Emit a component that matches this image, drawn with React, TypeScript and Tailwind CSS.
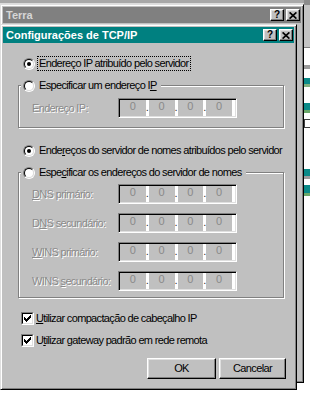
import React from 'react';

const raised =
  'border border-t-white border-l-white border-b-black border-r-black shadow-[inset_-1px_-1px_0_#808080,inset_1px_1px_0_#dfdfdf]';
const sunken =
  'border border-t-[#808080] border-l-[#808080] border-b-white border-r-white shadow-[inset_1px_1px_0_#000,inset_-1px_-1px_0_#dfdfdf]';
const frame =
  'border border-t-[#dfdfdf] border-l-[#dfdfdf] border-b-black border-r-black shadow-[inset_1px_1px_0_#fff,inset_-1px_-1px_0_#808080] p-[2px] bg-[#c0c0c0]';
const type = 'text-[11px] leading-[13px] tracking-[-0.65px]';
const body = `${type} text-black`;
const disabled = `${type} text-[#8a8a8a] [text-shadow:1px_1px_0_#fff]`;

const CloseGlyph = () => (
  <svg width="8" height="7" viewBox="0 0 8 7">
    <path d="M0.6 0.4L7.4 6.6M7.4 0.4L0.6 6.6" stroke="#000" strokeWidth="1.7" />
  </svg>
);

const CapButton = ({ children }: { children: React.ReactNode }) => (
  <span
    className={`flex items-center justify-center w-[14px] h-[12px] bg-[#c0c0c0] ${raised} text-[10px] font-bold leading-none text-black`}
  >
    {children}
  </span>
);

const TitleBar = ({ title, active }: { title: string; active?: boolean }) => (
  <div
    className={`flex items-center justify-between h-[16px] pl-[3px] pr-[1px] ${
      active ? 'bg-[#008080] text-white' : 'bg-[#808080] text-[#d6d6d6]'
    }`}
  >
    <span className="text-[11px] font-bold leading-none">{title}</span>
    <div className="flex gap-[2px]">
      <CapButton>?</CapButton>
      <CapButton>
        <CloseGlyph />
      </CapButton>
    </div>
  </div>
);

const Radio = ({ checked }: { checked?: boolean }) => (
  <span className="block w-[12px] h-[12px] shrink-0 rounded-full border border-t-[#808080] border-l-[#808080] border-b-white border-r-white">
    <span className="flex items-center justify-center w-full h-full rounded-full border border-t-black border-l-black border-b-[#dfdfdf] border-r-[#dfdfdf] bg-white">
      {checked && <span className="block w-[4px] h-[4px] rounded-full bg-black" />}
    </span>
  </span>
);

const RadioRow = ({
  checked,
  focused,
  children,
}: {
  checked?: boolean;
  focused?: boolean;
  children: React.ReactNode;
}) => (
  <div className="flex items-center gap-[2px]">
    <Radio checked={checked} />
    <span
      className={`px-[1px] border ${
        focused ? 'border-dotted border-black' : 'border-transparent'
      } ${body} whitespace-nowrap`}
    >
      {children}
    </span>
  </div>
);

const Check = () => (
  <span className="block w-[13px] h-[13px] shrink-0 border border-t-[#808080] border-l-[#808080] border-b-white border-r-white">
    <span className="flex items-center justify-center w-full h-full border border-t-black border-l-black border-b-[#dfdfdf] border-r-[#dfdfdf] bg-white">
      <svg width="7" height="7" viewBox="0 0 7 7" shapeRendering="crispEdges">
        <path d="M0 2h1v1h1v1h1v-1h1v-1h1v-1h1v-1h1v3h-1v1h-1v1h-1v1h-1v1h-1v-1h-1v-1h-1z" fill="#000" />
      </svg>
    </span>
  </span>
);

const IpBox = () => (
  <div className={`flex w-[119px] h-[20px] shrink-0 bg-[#c0c0c0] ${sunken} p-[1px]`}>
    {[0, 1, 2, 3].map((i) => (
      <React.Fragment key={i}>
        <span className="flex-1 text-center text-[11px] leading-[13px] text-[#8a8a8a]">0</span>
        <span className="flex justify-center w-[3px] bg-white text-[11px] leading-[14px] text-[#333]">
          {i < 3 ? '.' : ''}
        </span>
      </React.Fragment>
    ))}
  </div>
);

const FieldRow = ({ children }: { children: React.ReactNode }) => (
  <div className="flex items-center pl-[11px]">
    <span className={`w-[86px] ${disabled} whitespace-nowrap`}>{children}</span>
    <IpBox />
  </div>
);

const u = (s: string) => <span className="underline underline-offset-[1px]">{s}</span>;

const group =
  'w-[266px] ml-[15px] border border-[#808080] shadow-[1px_1px_0_#fff,inset_1px_1px_0_#fff] pl-[2px]';

const BackStrip = () => (
  <div className="absolute left-[304px] top-0 w-[6px] h-[400px] flex flex-col bg-white">
    <div className="h-[48px] bg-[#c4c4c4] border-t-[5px] border-[#8c8c8c] border-b border-b-[#808080]" />
    <div className="mt-[17px] h-[4px] bg-[#9c9c9c]" />
    <div className="mt-[9px] h-[6px] bg-[#0a8a88]" />
    <div className="h-[3px] bg-[#7fb07f]" />
    <div className="mt-[16px] h-[7px] bg-[#0a8a88]" />
    <div className="h-[3px] bg-[#6aa86a]" />
    <div className="mt-[6px] h-[9px] border border-[#404040] border-r-0 bg-white" />
    <div className="mt-[41px] h-[7px] bg-[#0a8a88]" />
    <div className="h-[3px] bg-[#9c9c9c]" />
    <div className="mt-[6px] h-[8px] bg-[#0a8a88]" />
    <div className="h-[3px] bg-[#6aa86a]" />
  </div>
);

export default function App() {
  return (
    <div className="relative w-[310px] h-[400px] overflow-hidden bg-white font-['Liberation_Sans',Arial,sans-serif]">
      <div className="h-[4px] bg-[#a8a8a8] border-b border-[#dcdcdc]" />
      <BackStrip />

      <div className={`absolute left-0 top-[4px] w-[304px] h-[379px] ${frame}`}>
        <TitleBar title="Terra" />
      </div>

      <div className={`absolute left-0 top-[24px] w-[297px] h-[366px] flex flex-col ${frame}`}>
        <TitleBar title="Configurações de TCP/IP" active />

        <div className="flex flex-col">
          <div className="ml-[20px] mt-[13px]">
            <RadioRow checked focused>
              Endereço IP atribuído pelo servidor
            </RadioRow>
          </div>

          <fieldset className={`${group} mt-[7px] pb-[9px]`}>
            <legend className="pl-[2px] pr-[2px] bg-[#c0c0c0]">
              <RadioRow>Especificar um endereço I{u('P')}</RadioRow>
            </legend>
            <div className="pt-[5px]">
              <FieldRow>Endereço IP:</FieldRow>
            </div>
          </fieldset>

          <div className="ml-[20px] mt-[15px]">
            <RadioRow checked>
              Ende{u('r')}eços do servidor de nomes atribuídos pelo servidor
            </RadioRow>
          </div>

          <fieldset className={`${group} mt-[7px] pb-[6px]`}>
            <legend className="pl-[2px] pr-[2px] bg-[#c0c0c0]">
              <RadioRow>Espe{u('c')}ificar os endereços do servidor de nomes</RadioRow>
            </legend>
            <div className="flex flex-col gap-[9px] pt-[4px]">
              <FieldRow>{u('D')}NS primário:</FieldRow>
              <FieldRow>D{u('N')}S secundário:</FieldRow>
              <FieldRow>{u('W')}INS primário:</FieldRow>
              <FieldRow>WINS {u('s')}ecundário:</FieldRow>
            </div>
          </fieldset>

          <div className="flex items-center gap-[2px] ml-[18px] mt-[14px]">
            <Check />
            <span className={body}>{u('U')}tilizar compactação de cabeçalho IP</span>
          </div>
          <div className="flex items-center gap-[2px] ml-[18px] mt-[9px]">
            <Check />
            <span className={body}>U{u('t')}ilizar gateway padrão em rede remota</span>
          </div>

          <div className="flex justify-end gap-[3px] pr-[8px] mt-[11px]">
            <button className={`w-[69px] h-[21px] bg-[#c0c0c0] ${raised} ${body}`}>OK</button>
            <button className={`w-[67px] h-[21px] bg-[#c0c0c0] ${raised} ${body}`}>Cancelar</button>
          </div>
        </div>
      </div>
    </div>
  );
}
